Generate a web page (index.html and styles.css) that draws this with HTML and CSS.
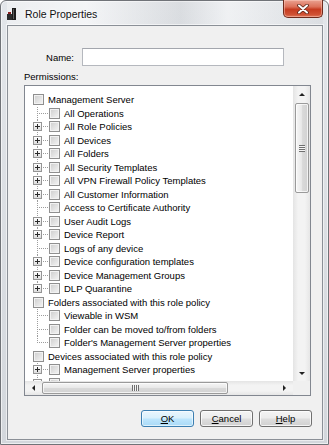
FILE: index.html
```html
<!DOCTYPE html>
<html lang="en">
<head>
    <meta charset="UTF-8">
    <meta name="viewport" content="width=device-width, initial-scale=1.0">
    <title>Role Properties</title>
    <link rel="stylesheet" href="styles.css">
</head>
<body>
    <div class="window">
        <div class="titlebar">
            <svg class="app-icon" width="10" height="12" viewBox="0 0 10 12">
                <rect x="5" y="0" width="4" height="12" fill="#1b1b1b"/>
                <rect x="0" y="6" width="5" height="6" fill="#2b2b2b"/>
                <rect x="1" y="4" width="3" height="2" fill="#8a1f1f"/>
                <rect x="6" y="1" width="1" height="10" fill="#5a5a5a"/>
            </svg>
            <span class="title">Role Properties</span>
            <div class="close-btn">
                <svg width="12" height="10" viewBox="0 0 12 10">
                    <path d="M2 1.5 L10 8.5 M10 1.5 L2 8.5" stroke="#5a2418" stroke-width="3.6" stroke-linecap="round"/>
                    <path d="M2 1.5 L10 8.5 M10 1.5 L2 8.5" stroke="#ffffff" stroke-width="2" stroke-linecap="round"/>
                </svg>
            </div>
        </div>

        <div class="client">
            <div class="name-row">
                <label class="name-label" for="roleName">Name:</label>
                <input type="text" id="roleName" class="text-input">
            </div>
            <div class="perm-label">Permissions:</div>

            <div class="tree">
                <div class="tree-body">
                    <div class="row top"><span class="cb"></span><span class="lbl">Management Server</span></div>
                    <div class="row child"><span class="tw"></span><span class="cb"></span><span class="lbl">All Operations</span></div>
                    <div class="row child"><span class="tw"><span class="plus"></span></span><span class="cb"></span><span class="lbl">All Role Policies</span></div>
                    <div class="row child"><span class="tw"><span class="plus"></span></span><span class="cb"></span><span class="lbl">All Devices</span></div>
                    <div class="row child"><span class="tw"><span class="plus"></span></span><span class="cb"></span><span class="lbl">All Folders</span></div>
                    <div class="row child"><span class="tw"><span class="plus"></span></span><span class="cb"></span><span class="lbl">All Security Templates</span></div>
                    <div class="row child"><span class="tw"><span class="plus"></span></span><span class="cb"></span><span class="lbl">All VPN Firewall Policy Templates</span></div>
                    <div class="row child"><span class="tw"><span class="plus"></span></span><span class="cb"></span><span class="lbl">All Customer Information</span></div>
                    <div class="row child"><span class="tw"></span><span class="cb"></span><span class="lbl">Access to Certificate Authority</span></div>
                    <div class="row child"><span class="tw"><span class="plus"></span></span><span class="cb"></span><span class="lbl">User Audit Logs</span></div>
                    <div class="row child"><span class="tw"><span class="plus"></span></span><span class="cb"></span><span class="lbl">Device Report</span></div>
                    <div class="row child"><span class="tw"></span><span class="cb"></span><span class="lbl">Logs of any device</span></div>
                    <div class="row child"><span class="tw"><span class="plus"></span></span><span class="cb"></span><span class="lbl">Device configuration templates</span></div>
                    <div class="row child"><span class="tw"><span class="plus"></span></span><span class="cb"></span><span class="lbl">Device Management Groups</span></div>
                    <div class="row child"><span class="tw last"><span class="plus"></span></span><span class="cb"></span><span class="lbl">DLP Quarantine</span></div>
                    <div class="row top"><span class="cb"></span><span class="lbl">Folders associated with this role policy</span></div>
                    <div class="row child"><span class="tw"></span><span class="cb"></span><span class="lbl">Viewable in WSM</span></div>
                    <div class="row child"><span class="tw"></span><span class="cb"></span><span class="lbl">Folder can be moved to/from folders</span></div>
                    <div class="row child"><span class="tw last"></span><span class="cb"></span><span class="lbl">Folder's Management Server properties</span></div>
                    <div class="row top"><span class="cb"></span><span class="lbl">Devices associated with this role policy</span></div>
                    <div class="row child"><span class="tw"><span class="plus"></span></span><span class="cb"></span><span class="lbl">Management Server properties</span></div>
                    <div class="row child"><span class="tw"><span class="plus"></span></span><span class="cb"></span></div>
                </div>

                <div class="vscroll">
                    <div class="sb-btn"><span class="arrow-up"></span></div>
                    <div class="vtrack">
                        <div class="vthumb"><span class="vgrip"></span></div>
                    </div>
                    <div class="sb-btn"><span class="arrow-down"></span></div>
                </div>

                <div class="hscroll">
                    <div class="sb-btn h"><span class="arrow-left"></span></div>
                    <div class="htrack">
                        <div class="hthumb"><span class="hgrip"></span></div>
                    </div>
                    <div class="sb-btn h"><span class="arrow-right"></span></div>
                </div>
                <div class="corner"></div>
            </div>

            <div class="buttons">
                <button type="button" class="btn btn-default"><u>O</u>K</button>
                <button type="button" class="btn"><u>C</u>ancel</button>
                <button type="button" class="btn"><u>H</u>elp</button>
            </div>
        </div>
    </div>
</body>
</html>
```

FILE: styles.css
```css
* {
    box-sizing: border-box;
}
body {
    margin: 0;
    background: #ffffff;
    font-family: "Liberation Sans", Arial, sans-serif;
    font-size: 9.5px;
    color: #000;
}
.window {
    width: 329px;
    height: 445px;
    border: 1px solid #707378;
    border-radius: 6px 6px 0 0;
    background: linear-gradient(to bottom, #e3e6ea, #d3d7dc);
    box-shadow: inset 0 0 0 1px rgba(255, 255, 255, 0.6);
    padding: 0 5px 4px 6px;
    display: flex;
    flex-direction: column;
}
.titlebar {
    height: 24px;
    display: flex;
    align-items: center;
    background: linear-gradient(90deg, rgba(255,255,255,0.35), rgba(255,255,255,0.6) 25%, rgba(0,0,0,0.04) 55%, rgba(255,255,255,0.45) 70%, rgba(0,0,0,0.03));
}
.app-icon {
    margin-top: 1px;
    flex: none;
}
.title {
    margin-left: 8px;
    margin-top: 1px;
    font-size: 10.5px;
    color: #111;
    text-shadow: 0 0 6px #fff, 0 0 3px #fff;
}
.close-btn {
    margin-left: auto;
    align-self: flex-start;
    margin-top: -1px;
    width: 40px;
    height: 18px;
    border: 1px solid #6e2a1c;
    border-top: none;
    border-radius: 0 0 5px 5px;
    background: linear-gradient(to bottom, #eaa291 0%, #dc7059 40%, #c63b20 55%, #cf5134 85%, #e0775a 100%);
    box-shadow: inset 0 0 0 1px rgba(255, 210, 200, 0.45);
    display: flex;
    align-items: center;
    justify-content: center;
}
.client {
    flex: 1;
    background: #f0f0f0;
    border: 1px solid #8b9097;
    box-shadow: 0 0 0 1px rgba(255, 255, 255, 0.55);
    padding: 22px 10px 0 16px;
    display: flex;
    flex-direction: column;
}
.name-row {
    display: flex;
    align-items: center;
    height: 18px;
}
.name-label {
    width: 50px;
    text-align: right;
    margin-right: 8px;
}
.text-input {
    width: 202px;
    height: 18px;
    border: 1px solid #b5b8be;
    border-top-color: #a3a6ad;
    background: #fff;
    padding: 0 3px;
    font: inherit;
}
.perm-label {
    margin-top: 5px;
    height: 12px;
    line-height: 12px;
}
.tree {
    margin-top: 2px;
    width: 287px;
    height: 311px;
    border: 1px solid #828790;
    background: #fff;
    display: grid;
    grid-template-columns: 1fr 17px;
    grid-template-rows: 1fr 14px;
}
.tree-body {
    overflow: hidden;
    padding-top: 7px;
    background: #fff;
}
.row {
    display: flex;
    align-items: center;
    height: 13.5px;
    white-space: nowrap;
}
.row.top {
    padding-left: 8px;
}
.row.child {
    padding-left: 5px;
}
.tw {
    width: 19px;
    align-self: stretch;
    display: flex;
    align-items: center;
    padding-left: 3px;
    background:
        repeating-linear-gradient(to right, #9c9c9c 0 1px, transparent 1px 2px) 7px 50% / 12px 1px no-repeat,
        repeating-linear-gradient(to bottom, #9c9c9c 0 1px, transparent 1px 2px) 7px 0 / 1px 100% no-repeat;
}
.tw.last {
    background-size: 12px 1px, 1px 50%;
}
.plus {
    width: 9px;
    height: 9px;
    border: 1px solid #959595;
    background:
        linear-gradient(#2a2a2a, #2a2a2a) center / 5px 1px no-repeat,
        linear-gradient(#2a2a2a, #2a2a2a) center / 1px 5px no-repeat,
        linear-gradient(to bottom, #ffffff, #dcdcdc);
}
.cb {
    flex: none;
    width: 11px;
    height: 11px;
    border: 1px solid #8f8f8f;
    background: linear-gradient(135deg, #cdcdcd, #f5f5f5);
    box-shadow: inset 0 0 0 1px #f2f2f2;
}
.lbl {
    margin-left: 4px;
}
.vscroll {
    display: flex;
    flex-direction: column;
    background: linear-gradient(90deg, #e4e4e4, #f3f3f3 30%, #f3f3f3 70%, #e6e6e6);
}
.sb-btn {
    height: 16px;
    display: flex;
    align-items: center;
    justify-content: center;
    flex: none;
}
.sb-btn.h {
    height: auto;
    width: 17px;
}
.vtrack {
    flex: 1;
    padding: 1px 1px 0 2px;
}
.vthumb {
    height: 90px;
    border: 1px solid #9a9a9a;
    border-radius: 2px;
    background: linear-gradient(90deg, #f6f6f6 0%, #e9e9e9 45%, #d9d9d9 55%, #d2d2d2 100%);
    box-shadow: inset 0 0 0 1px rgba(255, 255, 255, 0.7);
    display: flex;
    align-items: center;
    justify-content: center;
}
.vgrip {
    width: 6px;
    height: 7px;
    background: repeating-linear-gradient(to bottom, #6f6f6f 0 1px, #f4f4f4 1px 2px);
}
.hscroll {
    display: flex;
    background: linear-gradient(to bottom, #e4e4e4, #f3f3f3 30%, #f3f3f3 70%, #e6e6e6);
}
.htrack {
    flex: 1;
    padding: 1px 0 1px 0;
}
.hthumb {
    width: 186px;
    height: 100%;
    border: 1px solid #9a9a9a;
    border-radius: 2px;
    background: linear-gradient(to bottom, #f6f6f6 0%, #e9e9e9 45%, #d9d9d9 55%, #d2d2d2 100%);
    box-shadow: inset 0 0 0 1px rgba(255, 255, 255, 0.7);
    display: flex;
    align-items: center;
    justify-content: center;
}
.hgrip {
    width: 7px;
    height: 6px;
    background: repeating-linear-gradient(to right, #6f6f6f 0 1px, #f4f4f4 1px 2px);
}
.corner {
    background: #f0f0f0;
}
.arrow-up {
    border-left: 3px solid transparent;
    border-right: 3px solid transparent;
    border-bottom: 3px solid #222;
}
.arrow-down {
    border-left: 3px solid transparent;
    border-right: 3px solid transparent;
    border-top: 3px solid #222;
}
.arrow-left {
    border-top: 3px solid transparent;
    border-bottom: 3px solid transparent;
    border-right: 3px solid #222;
}
.arrow-right {
    border-top: 3px solid transparent;
    border-bottom: 3px solid transparent;
    border-left: 3px solid #222;
}
.buttons {
    margin-top: 14px;
    display: flex;
    justify-content: flex-end;
    gap: 6px;
}
.btn {
    width: 53px;
    height: 17px;
    padding: 0;
    font: inherit;
    color: #000;
    border: 1px solid #707070;
    border-radius: 3px;
    background: linear-gradient(to bottom, #f4f4f4 0%, #ececec 48%, #dedede 52%, #d0d0d0 100%);
    box-shadow: inset 0 0 0 1px rgba(255, 255, 255, 0.75);
}
.btn-default {
    border-color: #3c7fb1;
    background: linear-gradient(to bottom, #eaf6fd 0%, #d9f0fc 48%, #bee6fd 52%, #a9daf6 100%);
    box-shadow: inset 0 0 0 1px rgba(255, 255, 255, 0.6);
}
```
